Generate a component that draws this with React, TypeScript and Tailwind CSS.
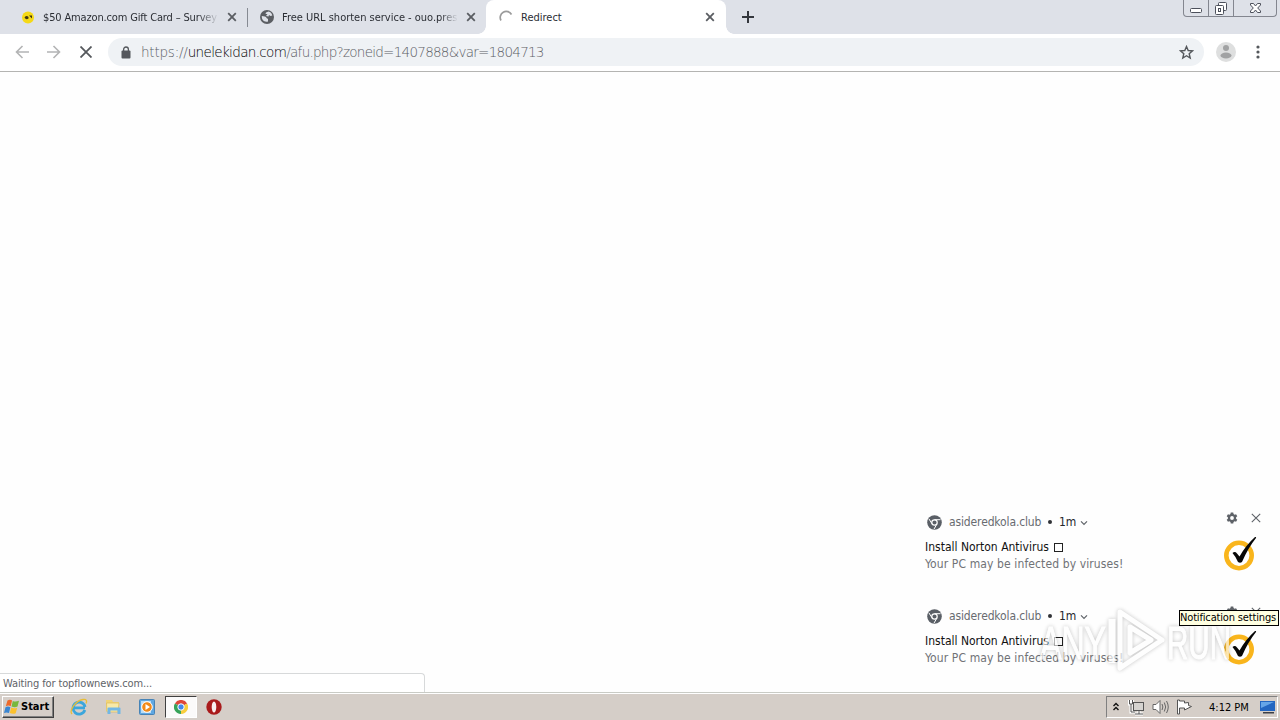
import React from 'react';

const font = "font-['DejaVu_Sans_Condensed','DejaVu_Sans',sans-serif]";

function TabClose() {
  return (
    <svg width="10" height="10" viewBox="0 0 10 10" className="shrink-0">
      <path d="M1.2 1.2l7.6 7.6M8.8 1.2L1.2 8.8" stroke="#5a5d62" strokeWidth="1.8" />
    </svg>
  );
}

function TabStrip() {
  return (
    <div className="flex h-[34px] shrink-0 bg-[#dee1e8] text-[11px] text-[#2b2e34]">
      <div className="flex h-[34px] w-[247px] items-center pl-[22px]">
        <svg width="13" height="13" viewBox="0 0 13 13" className="shrink-0">
          <circle cx="6" cy="6.5" r="6" fill="#f5d916" />
          <path d="M2.500 6.500q2-2.500 4-.5v1.500q-2.500 2-4-1zM7 4.500h3v3L8.500 6z" fill="#3f3714" />
        </svg>
        <div className="ml-2 mt-0.5 w-[176px] overflow-hidden whitespace-nowrap tracking-[-0.15px] [mask-image:linear-gradient(to_right,black_88%,transparent)]">
          $50 Amazon.com Gift Card – Survey
        </div>
        <div className="ml-2"><TabClose /></div>
      </div>
      <div className="mt-2 h-[19px] w-px bg-[#868a92]" />
      <div className="flex h-[34px] w-[238px] items-center pl-3">
        <svg width="14" height="14" viewBox="0 0 14 14" className="shrink-0">
          <circle cx="7" cy="7" r="7" fill="#5b5e63" />
          <path d="M1.800 6l3 .5q1.700 0 1.700 1.500l1.500 1v2.500C4 12.500 1.500 9.500 1.800 6zM6 2.500l2.500-1q3 .5 3.800 4l-1.800.5-1.500-1-.5 1.500-2.500-.5L7.500 4 5.500 4z" fill="#dee1e8" />
        </svg>
        <div className="ml-2 mt-0.5 w-[176px] overflow-hidden whitespace-nowrap tracking-[-0.01px] [mask-image:linear-gradient(to_right,black_90%,transparent)]">
          Free URL shorten service - ouo.pres
        </div>
        <div className="ml-2"><TabClose /></div>
      </div>
      <div className="relative flex h-[34px] w-[240px] items-center rounded-t-lg bg-white pl-[13px]">
        <span className="absolute -left-2 bottom-0 h-2 w-2 bg-[radial-gradient(circle_at_0_0,transparent_7.500px,white_8px)]" />
        <span className="absolute -right-2 bottom-0 h-2 w-2 bg-[radial-gradient(circle_at_100%_0,transparent_7.500px,white_8px)]" />
        <svg width="14" height="14" viewBox="0 0 14 14" className="shrink-0">
          <path d="M2 10.500A6 6 0 0 1 12.500 4.500" fill="none" stroke="#9b9b9b" strokeWidth="1.700" />
        </svg>
        <div className="ml-2 mt-0.5 w-[176px] whitespace-nowrap">Redirect</div>
        <div className="ml-2"><TabClose /></div>
      </div>
      <div className="flex w-11 items-center justify-center">
        <svg width="12" height="12" viewBox="0 0 12 12"><path d="M6 0v12M0 6h12" stroke="#34373d" strokeWidth="2" /></svg>
      </div>
      <div className="ml-auto mr-[3px] flex h-[17px] w-[94px] rounded-b-[4px] border border-t-0 border-[#83868f]">
        <div className="flex w-[25px] items-center justify-center border-r border-[#83868f]">
          <svg width="13" height="16" viewBox="0 0 13 16"><rect x="0.500" y="8.500" width="11" height="4" rx="1" fill="#fff" stroke="#4c505b" /></svg>
        </div>
        <div className="flex w-[25px] items-center justify-center border-r border-[#83868f]">
          <svg width="14" height="16" viewBox="0 0 14 16" fill="#fff" stroke="#4c505b">
            <rect x="4.500" y="2.500" width="8" height="8" rx="1" />
            <rect x="1.500" y="5.500" width="8" height="9" rx="1" />
            <rect x="4.500" y="8.500" width="2" height="3" />
          </svg>
        </div>
        <div className="flex flex-1 items-center justify-center">
          <svg width="13" height="16" viewBox="0 0 13 16">
            <path d="M1.500 3.500h3l2 2.500 2-2.500h3v1.500L8.700 8l2.800 3v1.500h-3l-2-2.500-2 2.500h-3V11l2.800-3-2.800-3z" fill="#fff" stroke="#4c505b" />
          </svg>
        </div>
      </div>
    </div>
  );
}

function Toolbar() {
  return (
    <div className="flex h-[38px] shrink-0 items-center border-b border-[#b4b4b2] bg-white pb-px pl-[15px]">
      <svg width="14" height="14" viewBox="0 0 14 14"><path d="M14 7H1.500M7.500 1L1.500 7l6 6" fill="none" stroke="#b3b4b5" strokeWidth="1.600" /></svg>
      <svg width="14" height="14" viewBox="0 0 14 14" className="ml-[18px]"><path d="M0 7h12.500M6.500 1l6 6-6 6" fill="none" stroke="#b3b4b5" strokeWidth="1.600" /></svg>
      <svg width="12" height="12" viewBox="0 0 12 12" className="ml-[19px]"><path d="M.5.5l11 11M11.500.5l-11 11" stroke="#55585c" strokeWidth="1.800" /></svg>
      <div className="ml-4 flex h-7 w-[1096px] items-center rounded-full bg-[#eff2f5] pl-[13px] pr-[10px]">
        <svg width="10" height="13" viewBox="0 0 10 13" className="shrink-0">
          <rect x="0.500" y="4.500" width="9" height="8" rx="1" fill="#55585d" />
          <path d="M2.600 5V3.400a2.400 2.400 0 0 1 4.800 0V5" fill="none" stroke="#55585d" strokeWidth="1.300" />
        </svg>
        <div className="ml-[10px] flex-1 whitespace-nowrap font-['DejaVu_Sans','DejaVu_Sans_Condensed',sans-serif] text-[13.5px] font-extralight text-[#5c6065]">
          <span className="tracking-[-0.22px]">https://</span>
          <span className="tracking-[-0.64px] text-[#000]">unelekidan.com</span>
          <span className="tracking-[-0.73px]">/afu.php?zoneid=1407888&amp;var=1804713</span>
        </div>
        <svg width="15" height="15" viewBox="0 0 15 15"><path d="M7.500 1.500l1.700 4 4.300.4-3.300 2.800 1 4.300-3.700-2.300L3.800 13l1-4.300L1.500 5.900l4.300-.4z" fill="none" stroke="#55585c" strokeWidth="1.400" /></svg>
      </div>
      <svg width="20" height="20" viewBox="0 0 20 20" className="ml-3">
        <circle cx="10" cy="10" r="10" fill="#dedfdf" />
        <circle cx="10" cy="6" r="3" fill="#a1a2a3" />
        <ellipse cx="10" cy="13.500" rx="5.500" ry="3" fill="#a1a2a3" />
      </svg>
      <svg width="4" height="14" viewBox="0 0 4 14" className="ml-5" fill="#55585c"><circle cx="2" cy="2" r="1.600" /><circle cx="2" cy="7" r="1.600" /><circle cx="2" cy="12" r="1.600" /></svg>
    </div>
  );
}

function Notification() {
  return (
    <div className="flex h-[94px] w-[361px] shrink-0">
      <div className="flex flex-1 flex-col pl-4 pt-[10px]">
        <div className="flex h-4 items-center pl-0.5 text-[12px]">
          <svg width="15" height="15" viewBox="0 0 15 15" className="mt-px shrink-0">
            <circle cx="7.500" cy="7.500" r="7.300" fill="#5a5f66" />
            <circle cx="7.500" cy="7.500" r="2.700" fill="none" stroke="#fff" strokeWidth="1.200" />
            <path d="M7.500 4.700h6M5 8.800L2 4M10 8.900l-3 5.200" stroke="#fff" strokeWidth="1" />
          </svg>
          <span className="ml-[7px] w-[92px] whitespace-nowrap tracking-[-0.13px] text-[#686b70]">asideredkola.club</span>
          <span className="ml-[7px] h-1 w-1 rounded-full bg-[#303236]" />
          <span className="ml-[7px] w-[18px] whitespace-nowrap text-[#25282c]">1m</span>
          <svg width="8" height="6" viewBox="0 0 8 6" className="ml-[3px] mt-px"><path d="M1 1.300l3 3 3-3" fill="none" stroke="#606469" strokeWidth="1.200" /></svg>
        </div>
        <div className="mt-[9px] flex h-4 items-center text-[12px] text-[#111]">
          <span className="w-[124px] whitespace-nowrap">Install Norton Antivirus</span>
          <span className="ml-[5px] h-[9px] w-[9px] border border-[#222]" />
        </div>
        <div className="mt-px h-4 whitespace-nowrap text-[12px] leading-4 tracking-[0.11px] text-[#707276]">Your PC may be infected by viruses!</div>
      </div>
      <div className="flex w-11 flex-col pt-[8px]">
        <div className="flex h-[12px] items-center">
          <svg width="12" height="12" viewBox="0 0 24 24" className="mr-3 shrink-0">
            <path fill="#5e6268" fillRule="evenodd" d="M9.500 1h5l.6 3.200 2 1.200 3-1.100 2.500 4.300-2.400 2.100v2.600l2.400 2.100-2.500 4.300-3-1.100-2 1.200-.6 3.200h-5l-.6-3.200-2-1.200-3 1.100-2.500-4.300 2.400-2.100v-2.600L1.400 8.600l2.500-4.300 3 1.100 2-1.200zM12 8.200a3.800 3.800 0 1 0 0 7.600 3.800 3.800 0 0 0 0-7.600z" />
          </svg>
          <svg width="10" height="10" viewBox="0 0 10 10" className="ml-[1px] shrink-0"><path d="M.8.8l8.400 8.400M9.200.8L.8 9.200" stroke="#5e6268" strokeWidth="1.100" /></svg>
        </div>
        <svg width="34" height="36" viewBox="0 0 34 36" className="-ml-[2px] mt-[11px]">
          <circle cx="15" cy="20.500" r="12.700" fill="#fff" stroke="#f9b51c" strokeWidth="4.600" />
          <path d="M8.500 18q2.500-2 4.500.5l2.500 3Q22 10 31 2q1.500-.5 1 1-8 10-14 24-2 1.500-4 0-2-5-5.500-9z" fill="#080808" />
        </svg>
      </div>
    </div>
  );
}

function Watermark() {
  return (
    <svg width="204" height="70" viewBox="0 0 204 70" className="pointer-events-none absolute left-[1034px] top-[605px] overflow-visible opacity-65 drop-shadow-[0_0_2px_rgba(0,0,0,0.35)]">
      <text x="6" y="54" textLength="66" lengthAdjust="spacingAndGlyphs" fontFamily="Liberation Sans Narrow, Liberation Sans" fontSize="47" fill="#fff" stroke="#fff">ANY</text>
      <text x="133" y="54" textLength="64" lengthAdjust="spacingAndGlyphs" fontFamily="Liberation Sans Narrow, Liberation Sans" fontSize="47" fill="#fff" stroke="#fff">RUN</text>
      <path d="M78 14v44" stroke="#fff" strokeWidth="7" />
      <path d="M86 7l42 28-42 28zM96 22l21 13-21 13z" fill="none" stroke="#fff" strokeWidth="5" strokeLinejoin="round" />
    </svg>
  );
}

function Taskbar() {
  return (
    <div className="flex h-[28px] shrink-0 items-center border-t border-[#c9cbc5] bg-[#d5cec8] shadow-[inset_0_1px_0_#fff]">
      <div className="ml-0.5 mt-px flex h-[22px] w-[52px] items-center border border-b-[#404040] border-l-white border-r-[#404040] border-t-white pl-px shadow-[inset_-1px_-1px_0_#808080]">
        <svg width="16" height="16" viewBox="0 0 16 16" className="shrink-0">
          <path d="M3.500 1.500q2.500-1.500 4.600 0L6.700 7.200Q4.500 6 1.800 7.200z" fill="#ee6a2a" />
          <path d="M8.800 2q2.700 1.200 6.200-.3L13.500 7.600q-3 1.200-6-.2z" fill="#78b83d" />
          <path d="M1.500 8.200Q4 7 6.400 8.300L5 14q-2.500-1.200-5 0z" fill="#3b86d1" />
          <path d="M7.200 8.500q2.600 1.300 6 .2l-1.500 5.500q-2.800 1.200-5.900-.3z" fill="#fbc12d" />
        </svg>
        <span className="ml-px mt-px whitespace-nowrap text-[11px] font-bold text-black">Start</span>
      </div>
      <svg width="18" height="18" viewBox="0 0 18 18" className="ml-[16px]">
        <path d="M15 9.800H4.500M14.800 12A6 6 0 1 1 15 9" fill="none" stroke="#3ba6dc" strokeWidth="2.800" />
        <path d="M2 16C-1 13 5 3 13 1.500c4-.8 4 2 3 4" fill="none" stroke="#e7bd38" strokeWidth="1.300" />
      </svg>
      <svg width="16" height="16" viewBox="0 0 16 16" className="ml-[17px] mt-px">
        <path d="M1 1h6l1 2h6v9H1z" fill="#f1d477" />
        <path d="M1.500 4H14l-1 9H2z" fill="#f8e9a7" stroke="#d6b351" strokeWidth=".6" />
        <path d="M2.500 15V9.500q0-1 1-1h11q1 0 1 1V15h-3v-3.500h-7V15z" fill="#72b7e5" />
      </svg>
      <svg width="16" height="16" viewBox="0 0 16 16" className="ml-[18px] mt-px">
        <rect x=".5" y=".5" width="15" height="15" rx="1" fill="#5fa7e2" stroke="#4783b6" />
        <rect x="2" y="2" width="10" height="12" fill="#b9dcf5" />
        <circle cx="8" cy="8" r="5.300" fill="#f28a19" stroke="#fff" />
        <path d="M6.500 5l4.500 3-4.500 3z" fill="#fff" />
      </svg>
      <div className="ml-[10px] mt-px flex h-[22px] w-8 items-center justify-center border border-b-white border-l-[#404040] border-r-white border-t-[#404040] bg-[#fbfafa]">
        <svg width="14" height="14" viewBox="0 0 14 14">
          <path d="M7 7L.9 3.500A7 7 0 0 1 13.100 3.500z" fill="#df4638" />
          <path d="M7 7l6.100-3.500A7 7 0 0 1 7 14z" fill="#f8cd3d" />
          <path d="M7 7v7A7 7 0 0 1 .9 3.500z" fill="#37a359" />
          <circle cx="7" cy="7" r="3.200" fill="#4387ed" stroke="#fff" />
        </svg>
      </div>
      <svg width="16" height="16" viewBox="0 0 16 16" className="ml-[9px] mt-px">
        <circle cx="8" cy="8" r="7.700" fill="#a91a1b" /><ellipse cx="8" cy="8" rx="2.300" ry="5.500" fill="#f9eeee" />
      </svg>
      <div className="ml-auto mr-0.5 mt-px flex h-[22px] w-[172px] items-center border border-b-white border-l-[#808080] border-r-white border-t-[#808080] pl-[6px]">
        <svg width="6" height="9" viewBox="0 0 6 9" className="-mt-0.5"><path d="M.5 4L3 1.500 5.500 4M.5 8L3 5.500 5.500 8" fill="none" stroke="#111" strokeWidth="1.400" /></svg>
        <svg width="17" height="17" viewBox="0 0 17 17" className="ml-[9px]">
          <path d="M1.500 1v4h3V1M3 5v8h4M7 15h8M11 12v3" fill="none" stroke="#fff" strokeWidth="3" />
          <rect x="5.500" y="3.500" width="10" height="8" fill="#d5d3d0" stroke="#555" />
          <path d="M1.500 1v4h3V1M3 5v8h4M7 15h8M11 12v3" fill="none" stroke="#555" />
        </svg>
        <svg width="17" height="16" viewBox="0 0 17 16" className="ml-[7px]" fill="none" stroke="#666">
          <path d="M1 5.500h3l4-4v13l-4-4H1z" fill="#fff" /><path d="M10 5q1.700 3 0 6M12.300 3.500q2.800 4.500 0 9M14.500 2q3.500 6 0 12" />
        </svg>
        <svg width="17" height="16" viewBox="0 0 17 16" className="ml-[7px]" fill="#fff" stroke="#555">
          <path d="M1.500 1v14h2V9h5v2l7-3.500-3-1V3.500L8.500 4V2h-5V1z" />
        </svg>
        <span className="ml-[16px] mt-0.5 w-[40px] whitespace-nowrap text-[11px] text-black">4:12 PM</span>
        <svg width="16" height="14" viewBox="0 0 16 14" className="ml-[11px]">
          <path d="M0 1h15v10H0z" fill="#2366c1" /><path d="M1 2h13L1 8z" fill="#65a5e8" /><path d="M3 12h11v1.500H3z" fill="#3b3f47" />
        </svg>
      </div>
    </div>
  );
}

export default function App() {
  return (
    <div className={`relative flex h-[720px] w-[1280px] flex-col overflow-hidden bg-white ${font}`}>
      <TabStrip />
      <Toolbar />
      <main className="flex min-h-0 flex-1 justify-between bg-[#fefefe]">
        <div className="flex h-[19px] w-[425px] items-center self-end rounded-tr border-r border-t border-[#d7d9da] bg-white pl-[3px] pt-0.5 text-[11px] tracking-[-0.13px] text-[#5f6368]">
          <span className="whitespace-nowrap">Waiting for topflownews.com...</span>
        </div>
        <div className="mr-[10px] mt-[432px] flex flex-col">
          <Notification />
          <Notification />
        </div>
      </main>
      <Taskbar />
      <Watermark />
      <div className="absolute left-[1179px] top-[610px] flex h-4 w-[100px] items-center whitespace-nowrap border border-black bg-[#ffffe1] text-[11px] tracking-[-0.16px] text-black">
        Notification settings
      </div>
    </div>
  );
}
